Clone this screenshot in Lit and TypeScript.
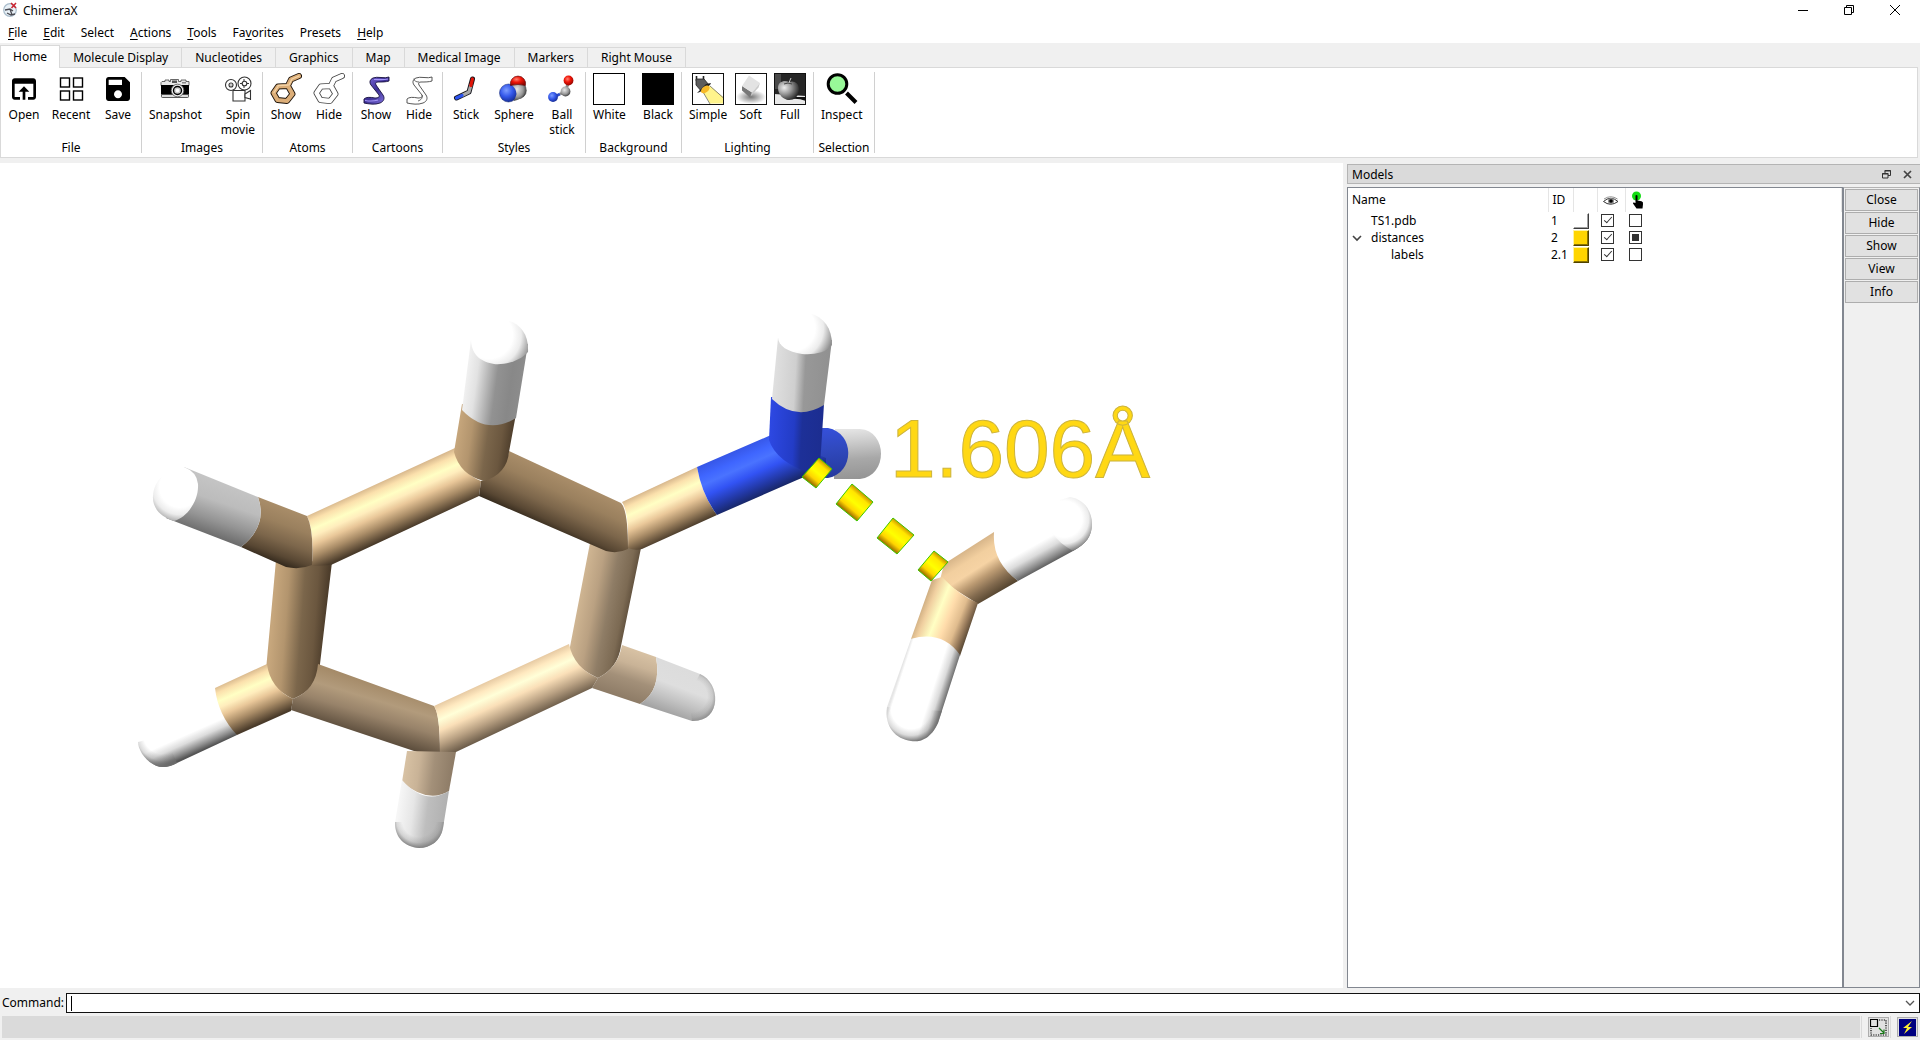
import { LitElement, html, css, svg, nothing, TemplateResult } from "lit";
import { customElement, property, state } from "lit/decorators.js";
import { classMap } from "lit/directives/class-map.js";
import { styleMap } from "lit/directives/style-map.js";

/* ---------- Icons ---------- */

const icon = (body: unknown, size = 32) => html`<svg class="icon" width=${size} height=${size} viewBox="0 0 ${size} ${size}" aria-hidden="true">${body}</svg>`;

const lampFrame = svg`<rect x=".5" y=".5" width="31" height="31" fill="none" stroke="#111"/>`;

const icons: Record<string, TemplateResult> = {
  open: icon(svg`<path transform="scale(1.3333)" d="M19 4H5c-1.11 0-2 .9-2 2v12c0 1.1.89 2 2 2h4v-2H5V8h14v10h-4v2h4c1.1 0 2-.9 2-2V6c0-1.1-.89-2-2-2zm-7 6l-4 4h3v6h2v-6h3l-4-4z"/>`),
  recent: icon(svg`<g fill="none" stroke="#000" stroke-width="1.4"><rect x="5.5" y="5" width="9" height="9"/><rect x="18.5" y="5" width="9" height="9"/><rect x="5.5" y="18" width="9" height="9"/><rect x="18.5" y="18" width="9" height="9"/></g>`),
  save: icon(svg`<path transform="scale(1.3333)" d="M17 3H5c-1.11 0-2 .9-2 2v14c0 1.1.89 2 2 2h14c1.1 0 2-.9 2-2V7l-4-4zm-5 16c-1.66 0-3-1.34-3-3s1.34-3 3-3 3 1.34 3 3-1.34 3-3 3zm3-10H5V5h10v4z"/>`),
  snapshot: icon(svg`
    <path d="M3 8.500h3V7h4v1.500h1.500V6.500h8V8.500H22V7h5v1.500h3v4H2v-3z" fill="#e8e8e8" stroke="#444" stroke-width=".8"/>
    <rect x="13" y="7.500" width="5" height="2.500" fill="#555"/><rect x="23" y="9" width="4" height="1.500" fill="#888"/>
    <rect x="2" y="12" width="28" height="9.500" fill="#000"/>
    <path d="M2.500 21.500h27v2.200q0 .8-1 .8h-25q-1 0-1-.8z" fill="#ddd" stroke="#333" stroke-width=".8"/>
    <circle cx="18.500" cy="17.500" r="6.300" fill="#eee" stroke="#555" stroke-width=".8"/><circle cx="18.500" cy="17.500" r="4" fill="#ccc" stroke="#000" stroke-width="1.400"/><circle cx="18.500" cy="17.500" r="1.800" fill="#fff"/>`),
  movie: icon(svg`
    <g fill="#fff" stroke="#333" stroke-width="1.100"><circle cx="9" cy="12" r="5.500"/><circle cx="22.500" cy="10.500" r="6.500"/><circle cx="9" cy="12" r="2"/><circle cx="22.500" cy="10.500" r="2.300"/>
    <path d="M11 17.500h12v10.500H11z"/><path d="M23 21l5.500-3.500v8.500L23 24.500z"/></g>
    <path d="M28.500 17.500V27M8.500 12h1M22 6v2M22 13v2M18 10.500h2M25 10.500h2" stroke="#333" fill="none"/>`),
  atomsShow: icon(svg`
    <g fill="none" stroke-linejoin="round" stroke-linecap="round">
      <path d="M8 13.500l10-.500 4.500 8-5.500 7-9.500-1-4-7zM18 12.500l3-6 8-3.500" stroke="#1d130a" stroke-width="6"/>
      <path d="M8 13.500l10-.500 4.500 8-5.500 7-9.500-1-4-7zM18 12.500l3-6 8-3.500" stroke="#dcae78" stroke-width="4.200"/>
      <path d="M8 12.500l10-.500M4 19.500l4-6M19 12l3-6 7-3" stroke="#f4d3a6" stroke-width="1.300"/></g>`),
  atomsHide: icon(svg`
    <g fill="none" stroke-linejoin="round" stroke-linecap="round">
      <path d="M8 13.500l10-.500 4.500 8-5.500 7-9.500-1-4-7zM18 12.500l3-6 8-3.500" stroke="#444" stroke-width="6"/>
      <path d="M8 13.500l10-.500 4.500 8-5.500 7-9.500-1-4-7zM18 12.500l3-6 8-3.500" stroke="#fff" stroke-width="4.400"/></g>`),
  cartoonShow: icon(svg`
    <defs><linearGradient id="rib" x1="0" x2="1" y1="0" y2="1"><stop offset="0" stop-color="#8672e8"/><stop offset=".5" stop-color="#3c2f94"/><stop offset="1" stop-color="#9384f2"/></linearGradient></defs>
    <path d="M29 4c-4 2-12-1-16 1-3 1.500-4 4-2 7l8 10c1 2-1 3-4 3-5-1-9-1-11 1v4c5 1 11 2 16 0 4-1.500 5-5 3-8L16 12c-1-2 0-3 2-3 4 0 8 0 11-1z" fill="url(#rib)" stroke="#16103c" stroke-width=".9"/>
    <path d="M5 27.500c5 .8 9 .8 13-.5M14 6.500c5 0 9 .7 14-.5" stroke="#a698fa" stroke-width="1.200" fill="none"/>`),
  cartoonHide: icon(svg`
    <path d="M29 4c-4 2-12-1-16 1-3 1.500-4 4-2 7l8 10c1 2-1 3-4 3-5-1-9-1-11 1v4c5 1 11 2 16 0 4-1.500 5-5 3-8L16 12c-1-2 0-3 2-3 4 0 8 0 11-1z" fill="#fff" stroke="#444" stroke-width=".9"/>
    <path d="M11 5.500c0 2.500 2 3.500 5 3.500M19 22c1 3-1 5-4 6" stroke="#444" stroke-width=".8" fill="none"/>`),
  stick: icon(svg`
    <g fill="none" stroke-linecap="round" stroke-linejoin="round">
      <path d="M6.500 25L19 19l3.500-13" stroke="#15151c" stroke-width="5"/>
      <path d="M12 22.500L19 19l1.800-6.500" stroke="#a8a8a8" stroke-width="3.200"/>
      <path d="M6.500 25l5.500-2.500" stroke="#2c54f0" stroke-width="3.200"/>
      <path d="M20.800 12.500l1.700-6.500" stroke="#e01408" stroke-width="3.200"/></g>`),
  sphere: icon(svg`
    <defs>
      <radialGradient id="sb" cx=".38" cy=".35" r=".7"><stop offset="0" stop-color="#7d9dff"/><stop offset=".5" stop-color="#3458ea"/><stop offset="1" stop-color="#142a90"/></radialGradient>
      <radialGradient id="sr" cx=".4" cy=".35" r=".7"><stop offset="0" stop-color="#ff8070"/><stop offset=".45" stop-color="#f01508"/><stop offset="1" stop-color="#8a0500"/></radialGradient>
      <radialGradient id="sg" cx=".4" cy=".35" r=".7"><stop offset="0" stop-color="#e8e8e8"/><stop offset=".6" stop-color="#999"/><stop offset="1" stop-color="#333"/></radialGradient>
    </defs>
    <circle cx="20" cy="17.500" r="8.300" fill="url(#sg)" stroke="#333" stroke-width=".6"/>
    <circle cx="10.500" cy="20" r="9" fill="url(#sb)" stroke="#142870" stroke-width=".5"/>
    <path d="M13 11.500q5 3.500 5.500 9.500-.5 3-3 7 10-2 12-9.500.5-3 0-5.500-4-5-14.500-1.500z" fill="url(#sg)"/>
    <path d="M12.500 12.500A7.700 7.700 0 1 1 27.500 12.500Q20 10.500 12.500 12.500z" fill="url(#sr)" stroke="#5a0000" stroke-width=".6"/>`),
  ball: icon(svg`
    <defs>
      <radialGradient id="bb" cx=".38" cy=".35" r=".7"><stop offset="0" stop-color="#7d9dff"/><stop offset=".5" stop-color="#3458ea"/><stop offset="1" stop-color="#142a90"/></radialGradient>
      <radialGradient id="br" cx=".4" cy=".35" r=".7"><stop offset="0" stop-color="#ff8070"/><stop offset=".45" stop-color="#f01508"/><stop offset="1" stop-color="#8a0500"/></radialGradient>
      <radialGradient id="bg" cx=".4" cy=".35" r=".7"><stop offset="0" stop-color="#e8e8e8"/><stop offset=".6" stop-color="#999"/><stop offset="1" stop-color="#333"/></radialGradient>
    </defs>
    <path d="M8 24l6-3" stroke="#2c4cc8" stroke-width="2.800"/><path d="M14 21l5-2" stroke="#888" stroke-width="2.800"/>
    <path d="M20 17l1.500-5" stroke="#888" stroke-width="2.800"/><path d="M21.500 12l1.500-5" stroke="#c01008" stroke-width="2.800"/>
    <circle cx="7" cy="24" r="4.900" fill="url(#bb)"/><circle cx="19.500" cy="18.500" r="4.900" fill="url(#bg)"/><circle cx="22.500" cy="7.500" r="4.900" fill="url(#br)"/>`),
  white: icon(svg`<rect x=".5" y=".5" width="31" height="31" fill="#fff" stroke="#000"/>`),
  black: icon(svg`<rect width="32" height="32"/>`),
  simple: icon(svg`
    <path d="M11 19l7 11.500H31V24L18 13z" fill="#fff48c"/><path d="M11 19l7 12M18 13l13 11.500" stroke="#555" stroke-width=".7"/>
    <path d="M4.500 3v5M11.500 3v5" stroke="#222" stroke-width="1.600"/>
    <path d="M4 6h8l5 6-7 7-6-7z" fill="#5c5c5c" stroke="#222" stroke-width=".8"/>
    <path d="M5 20l3-1 10-7 1-2-5 1-5 5z" fill="#222"/><ellipse cx="13" cy="16.500" rx="5" ry="3" transform="rotate(-38 13 16)" fill="#f7b928"/>${lampFrame}`),
  soft: icon(svg`
    <defs><radialGradient id="sh" cx=".5" cy=".5" r=".5"><stop offset="0" stop-color="#777"/><stop offset="1" stop-color="#fff"/></radialGradient></defs>
    <rect width="32" height="32" fill="#fff"/><ellipse cx="16" cy="24" rx="15" ry="7" fill="url(#sh)"/>
    <path d="M7 13l10 6.500-2 5-8-7z" fill="#777"/><path d="M14 2.500l11 7.500-8 9.500L7 13z" fill="#e3e3e3"/><path d="M17 19.500l8-9.500-1.500 4.500-8 9z" fill="#c9c9c9"/>${lampFrame}`),
  full: icon(svg`
    <defs><radialGradient id="ap" cx=".3" cy=".35" r=".75"><stop offset="0" stop-color="#eee"/><stop offset=".45" stop-color="#999"/><stop offset="1" stop-color="#222"/></radialGradient></defs>
    <rect width="32" height="32" fill="#262626"/><path d="M0 0h7v16H0z" fill="#4a4a4a"/><path d="M0 21l32 2v9H0z" fill="#e9e9e9"/><path d="M12 27q10-3 20 1v-4H18z" fill="#111"/>
    <path d="M4 15c0-7 7-8 11-6 5-2 10 1 10 7 0 8-5 11-10 11S4 22 4 15z" fill="url(#ap)"/><path d="M15 10q1-3 2-5" stroke="#ccc" stroke-width="1" fill="none"/><path d="M10 11q4-2 8 0" stroke="#444" fill="none"/>${lampFrame}`),
  inspect: icon(svg`<path d="M20.500 20l9.500 9.500" stroke="#000" stroke-width="4"/><circle cx="11.500" cy="11" r="9.300" fill="#98f898" stroke="#000" stroke-width="3"/>`),
};

const appLogo = svg`
  <circle cx="8" cy="9" r="6.300" fill="#e8f0f6" stroke="#a9bccb" stroke-width="1.200"/>
  <path d="M3 9l5-1 2 6M8 8l3 2M5 12l4 2 4-1" stroke="#4a4a52" stroke-width="1.300" fill="none"/>
  <path d="M9 2l5 5M14 2L9.500 7" stroke="#cc2430" stroke-width="1.500" fill="none"/>`;

/* ---------- Molecule scene ---------- */

const palettes: Record<string, string[]> = {
  tanBright: ["0 #d9b98e", ".12 #fbe0ac", ".28 #ffffc4", ".4 #ffedbd", ".55 #e9c799", ".75 #a98c67", "1 #4a3b2a"],
  tanSoft: ["0 #e6c9a2", ".15 #ffe9c0", ".3 #ffffd8", ".5 #fadfb8", ".75 #b9a183", "1 #6e5e4b"],
  tanDark: ["0 #a98d69", ".3 #9a805e", ".6 #7c664b", ".85 #584733", "1 #352a1d"],
  tanDim: ["0 #a58b69", ".3 #b29b7c", ".6 #98836a", "1 #5e4f3e"],
  tanSide: ["0 #c6a67c", ".25 #b3956e", ".55 #7b664b", ".8 #6b573f", "1 #4d3d2b"],
  tanSideSoft: ["0 #cfb592", ".3 #baa182", ".58 #8f7d66", ".85 #7c6a53", "1 #5e4e3b"],
  tanPale: ["0 #d8c2a4", ".3 #c9b397", ".6 #a39079", "1 #8d7b66"],
  tanTurn: ["0 #d8b68a", ".2 #f2cf9f", ".4 #f6d3a4", ".6 #bb9a72", ".8 #836b4f", "1 #54442f"],
  tanLeft: ["0 #c9a87c", ".15 #f0cfa0", ".35 #ffffc4", ".55 #ffdcab", ".75 #e0bc8e", ".9 #96795a", "1 #5f4d38"],
  blueBright: ["0 #3656e6", ".2 #3f66ff", ".35 #4a73ff", ".55 #3253f4", ".8 #2238a4", "1 #172560"],
  blueDark: ["0 #2d48e2", ".45 #233cc6", ".6 #1d3098", "1 #1c2d90"],
  blueFar: ["0 #3550da", ".4 #3049be", "1 #24389a"],
  whiteSide: ["0 #f2f2f2", ".2 #e2e2e2", ".55 #929292", ".8 #888888", "1 #8c8c8c"],
  whiteN: ["0 #e0e0e0", ".4 #cfcfcf", ".58 #989898", "1 #919191"],
  whiteBack: ["0 #e4e4e4", ".25 #cccccc", ".6 #a8a8a8", "1 #949494"],
  whiteDown: ["0 #c4c4c4", ".35 #bcbcbc", ".7 #949494", "1 #6a6a6a"],
  whiteFar: ["0 #dcdcdc", ".4 #dedede", ".7 #c2c2c2", "1 #a2a2a2"],
  whitePale: ["0 #f6f6f6", ".3 #e6e6e6", ".6 #bebebe", "1 #b0b0b0"],
  whiteBright: ["0 #ffffff", ".6 #ffffff", ".75 #dcdcdc", ".9 #8e8e8e", "1 #555555"],
  whiteGlow: ["0 #e6e6e6", ".05 #ffffff", ".7 #ffffff", ".85 #dadada", "1 #6f6f6f"],
  dash: ["0 #c48a00", ".2 #ffe600", ".5 #ffff00", ".75 #ffd400", "1 #8a5c00"],
};

const stops = (name: string) =>
  palettes[name].map((s) => {
    const [offset, color] = s.split(" ");
    return svg`<stop offset=${offset} stop-color=${color}/>`;
  });

/* Outline, palette, and the line across the tube from its upper or left edge. */
type Tube = [string, string, number, number, number, number];

const tubes: Tube[] = [
  ["M590 543L641 548L621 646Q618 668 598 678Q576 668 569 652z", "tanSideSoft", 580, 595, 631, 605],
  ["M276 560L332 562L320 664Q319 688 293 699Q268 686 266 670z", "tanSide", 273, 612, 326, 616],
  ["M215 688L138 742C138 752 150 767 163 767Q170 767 177 763L237 735L228 700z", "whiteBright", 215, 688, 236, 735],
  ["M215 688L267 664Q270 688 293 699L291 711L237 735Q218 715 215 688z", "tanBright", 240, 676, 261, 723],
  ["M318 664L434 706Q440 714 440 753Q430 756 420 753L291 710L293 699Q316 690 318 664z", "tanDim", 376, 684, 361, 734],
  ["M622 645L656 657Q662 690 640 704L592 688L598 678Q618 668 622 645z", "tanPale", 640, 651, 624, 699],
  ["M656 657L700 674C721 683 722 722 692 721L640 704Q662 690 656 657z", "whiteFar", 680, 667, 663, 712],
  ["M569 644Q574 668 598 678L592 688L456 752L440 753Q440 715 434 706z", "tanSoft", 501, 675, 522, 721],
  ["M407 751L456 752L449 791Q428 804 402 782z", "tanPale", 404, 767, 453, 773],
  ["M402 780Q425 806 449 791L443 828C441 841 430 848 419 848C405 847 395 838 395 823z", "whitePale", 398, 812, 446, 818],
  ["M455 448Q459 472 481 481L479 496L331 565L312 566Q314 530 307 516z", "tanBright", 381, 482, 403, 531],
  ["M258 497L307 516Q314 530 312 565Q300 570 286 567L241 547Q268 526 258 497z", "tanDark", 282, 506, 263, 558],
  ["M184 467L258 497Q268 526 241 547L166 518z", "whiteDown", 221, 482, 203, 534],
  ["M509 451L621 503Q628 510 628 549Q618 554 606 551L479 496L481 481Q505 474 509 451z", "tanDark", 565, 477, 542, 526],
  ["M462 404L454 452Q460 475 484 481Q507 474 509 452L516 414z", "tanSide", 458, 428, 513, 436],
  ["M471 340L462 410Q487 436 516 418L528 344z", "whiteSide", 465, 378, 522, 386],
  ["M622 502L697 467Q702 495 717 515L642 549Q635 551 628 548Q629 512 622 502z", "tanBright", 659, 485, 681, 532],
  ["M835 429H860C888 431 888 476 860 479H834z", "whiteBack", 856, 429, 860, 479],
  ["M818 428H828C855 433 855 473 828 478H812z", "blueFar", 830, 428, 836, 480],
  ["M697 467L771 435L826 458V468L797 480L717 515Q702 495 697 467z", "blueBright", 735, 450, 757, 499],
  ["M771 397L769 440Q776 462 812 474L820 466L824 404z", "blueDark", 770, 430, 823, 433],
  ["M778 338L772 399Q796 422 824 405L832 340z", "whiteN", 774, 368, 828, 371],
  ["M944 564L994 532Q994 562 1018 581L978 604L940 580z", "tanTurn", 971, 547, 1000, 592],
  ["M942 577Q960 596 978 603L960 656Q942 634 911 639L932 580z", "tanLeft", 920, 608, 970, 628],
  ["M911 639Q942 630 960 655L938 723C929 742 917 742 911 741C896 739 884 727 887 707z", "whiteGlow", 899, 676, 948, 692],
  ["M994 533L1070 497C1084 499 1092 511 1092 524C1092 536 1086 544 1073 551L1018 581Q992 562 994 533z", "whiteBright", 1025, 508, 1055, 562],
  ["M819 458L832 469L816 488L802 477z", "dash", 826, 463, 809, 483],
  ["M852 484L873 502L857 521L836 504z", "dash", 863, 493, 846, 513],
  ["M893 518L914 535L897 554L877 538z", "dash", 904, 526, 887, 547],
  ["M934 551L948 562L931 581L918 570z", "dash", 941, 556, 924, 576],
];

/* Rounded bond ends: outline, highlight centre and radius, rim color, and how solid the highlight is. */
type Cap = [string, number, number, number, string, number];

const caps: Cap[] = [
  ["M471 341C472 328 487 319 500 319C519 321 529 333 528 352C519 362 504 365 494 364C482 362 472 356 471 341z", 489, 335, 43, "#8f8f8f", 1],
  ["M184 467Q197 472 198 484C199 500 188 517 174 521C160 517 152 507 153 496C154 480 167 468 184 467z", 180, 487, 37, "#9a9a9a", 1],
  ["M778 337C779 321 794 313 809 313C824 317 832 328 832 345C826 353 813 355 802 354C788 352 778 346 778 337z", 792, 328, 42, "#8f8f8f", 1],
  ["M1060 500L1070 497C1084 499 1092 511 1092 524C1092 536 1086 544 1073 551Q1060 544 1052 533z", 1064, 519, 33, "#777777", 1],
  ["M887 707L942 711L938 723C929 742 917 742 911 741C896 739 884 727 887 707z", 911, 709, 33, "#6f6f6f", 0],
  ["M138 742C138 752 150 767 163 767Q170 767 177 763L165 735z", 163, 734, 33, "#6f6f6f", 0],
  ["M700 674C721 683 722 722 692 721L688 695z", 691, 696, 27, "#8c8c8c", 0],
  ["M395 822H444L443 828C441 841 430 848 419 848C405 847 395 838 395 823z", 419, 820, 28, "#808080", 0],
];

@customElement("molecule-view")
export class MoleculeView extends LitElement {
  static styles = css`
    :host { display: block; min-width: 0; min-height: 0; background: #fff; overflow: hidden; }
    .scene { display: block; width: 100%; height: 100%; }
    .distance { font-family: "Liberation Sans", Arial, sans-serif; font-size: 82px; fill: #ffd814; stroke: #cdb43c; stroke-width: 1; }
  `;

  render() {
    return html`<svg class="scene" viewBox="0 163 1343 825" preserveAspectRatio="xMidYMid meet" role="img" aria-label="TS1.pdb">
      <defs>
        ${tubes.map(([, name, x1, y1, x2, y2], i) => svg`<linearGradient id="t${i}" gradientUnits="userSpaceOnUse" x1=${x1} y1=${y1} x2=${x2} y2=${y2}>${stops(name)}</linearGradient>`)}
        ${caps.map(([, cx, cy, r, edge, solid], i) => svg`<radialGradient id="c${i}" gradientUnits="userSpaceOnUse" cx=${cx} cy=${cy} r=${r}>
          ${solid
            ? svg`<stop offset="0" stop-color="#fff"/><stop offset=".55" stop-color="#fff"/><stop offset=".75" stop-color="#ececec"/><stop offset="1" stop-color=${edge}/>`
            : svg`<stop offset=".6" stop-color=${edge} stop-opacity="0"/><stop offset=".8" stop-color=${edge} stop-opacity=".25"/><stop offset="1" stop-color=${edge}/>`}
        </radialGradient>`)}
      </defs>
      ${tubes.map(([d, name], i) => svg`<path d=${d} fill="url(#t${i})" stroke=${name === "dash" ? "#3cc800" : "none"} stroke-width="1"/>`)}
      ${caps.map(([d], i) => svg`<path d=${d} fill="url(#c${i})"/>`)}
      <text class="distance" x="890" y="477">1.606Å</text>
    </svg>`;
  }
}

/* ---------- Ribbon ---------- */

interface Tool { label: string; icon: string; }
interface Group { title: string; width: number; tools: Tool[]; }

const groups: Group[] = [
  { title: "File", width: 141, tools: [{ label: "Open", icon: "open" }, { label: "Recent", icon: "recent" }, { label: "Save", icon: "save" }] },
  { title: "Images", width: 121, tools: [{ label: "Snapshot", icon: "snapshot" }, { label: "Spin\nmovie", icon: "movie" }] },
  { title: "Atoms", width: 90, tools: [{ label: "Show", icon: "atomsShow" }, { label: "Hide", icon: "atomsHide" }] },
  { title: "Cartoons", width: 90, tools: [{ label: "Show", icon: "cartoonShow" }, { label: "Hide", icon: "cartoonHide" }] },
  { title: "Styles", width: 143, tools: [{ label: "Stick", icon: "stick" }, { label: "Sphere", icon: "sphere" }, { label: "Ball\nstick", icon: "ball" }] },
  { title: "Background", width: 96, tools: [{ label: "White", icon: "white" }, { label: "Black", icon: "black" }] },
  { title: "Lighting", width: 132, tools: [{ label: "Simple", icon: "simple" }, { label: "Soft", icon: "soft" }, { label: "Full", icon: "full" }] },
  { title: "Selection", width: 61, tools: [{ label: "Inspect", icon: "inspect" }] },
];

@customElement("tool-ribbon")
export class ToolRibbon extends LitElement {
  @state() private active = "Home";

  static styles = css`
    :host { display: block; padding: 2px 2px 5px 0; background: #f0f0f0; }
    button { font: inherit; color: inherit; border: 0; background: none; padding: 0; margin: 0; }
    .tabs { display: flex; align-items: flex-end; height: 22px; }
    .tab { height: 20px; padding: 0 13px; border: 1px solid #d9d9d9; border-left: 0; border-bottom: 0; background: #f0f0f0; white-space: nowrap; }
    .tab.active { height: 23px; margin-bottom: -1px; padding: 0 12px; border-left: 1px solid #d9d9d9; background: #fff; z-index: 1; }
    .panel { display: flex; height: 91px; box-sizing: border-box; padding-top: 4px; border: 1px solid #d9d9d9; background: #fff; }
    .group { flex: none; box-sizing: border-box; display: flex; flex-direction: column; height: 81px; border-right: 1px solid #d0d0d0; }
    .tools { flex: 1; display: flex; justify-content: space-between; align-items: flex-start; padding: 1px 7px 0; }
    .tool { display: flex; flex-direction: column; align-items: center; gap: 2px; line-height: 15px; white-space: pre-line; }
    .icon { display: block; }
    .title { text-align: center; line-height: 10px; }
  `;

  render() {
    const tabs = ["Home", "Molecule Display", "Nucleotides", "Graphics", "Map", "Medical Image", "Markers", "Right Mouse"];
    return html`
      <div class="tabs" role="tablist">
        ${tabs.map((t) => html`<button role="tab" aria-selected=${t === this.active} class=${classMap({ tab: true, active: t === this.active })} @click=${() => (this.active = t)}>${t}</button>`)}
      </div>
      <div class="panel" role="tabpanel">
        ${groups.map((g) => html`<section class="group" style=${styleMap({ width: `${g.width}px` })}>
          <div class="tools">${g.tools.map((t) => html`<button class="tool">${icons[t.icon]}<span>${t.label}</span></button>`)}</div>
          <div class="title">${g.title}</div>
        </section>`)}
      </div>`;
  }
}

/* ---------- Models panel ---------- */

interface Model { name: string; id: string; depth: number; open?: boolean; color?: string; shown: boolean; selected: "no" | "partial"; }

@customElement("models-panel")
export class ModelsPanel extends LitElement {
  @property({ attribute: false }) models: Model[] = [
    { name: "TS1.pdb", id: "1", depth: 0, shown: true, selected: "no" },
    { name: "distances", id: "2", depth: 0, open: true, color: "#ffd500", shown: true, selected: "partial" },
    { name: "labels", id: "2.1", depth: 1, color: "#ffd500", shown: true, selected: "no" },
  ];

  static styles = css`
    :host { display: flex; flex-direction: column; gap: 3px; min-height: 0; }
    button { font: inherit; color: inherit; margin: 0; }
    .caption { display: flex; align-items: center; gap: 10px; height: 20px; box-sizing: border-box; padding: 1px 7px 0 4px; border: 1px solid #b4b4b4; border-right: 0; background: #dadada; }
    .caption-text { flex: 1; }
    .caption-button { display: block; padding: 0; border: 0; background: none; line-height: 0; }
    .body { flex: 1; display: flex; min-height: 0; }
    .tree { flex: 1; min-width: 0; border: 1px solid #828790; background: #fff; }
    .table { width: 100%; table-layout: fixed; border-collapse: collapse; }
    .c-name { width: 200px; } .c-id { width: 25px; } .c-color { width: 24px; } .c-shown { width: 28px; }
    th { height: 24px; padding: 0 0 0 4px; border-right: 1px solid #e5e5e5; text-align: left; font-weight: 400; }
    td { height: 17px; padding: 0; line-height: 17px; vertical-align: middle; }
    .name { display: flex; align-items: center; }
    .toggle { width: 19px; height: 17px; padding: 0; border: 0; background: none; text-align: left; line-height: 0; margin-left: 4px; }
    .indent { width: 20px; }
    .id { padding-left: 3px; }
    .swatch { display: block; width: 16px; height: 16px; padding: 0; border: 1px solid; border-color: #fff #3c3c3c #3c3c3c #fff; background: #fff; }
    .swatch.filled { border-color: #fff3a0 #4f4200 #4f4200 #fff3a0; box-shadow: inset -1px -1px #8a7300; }
    .swatch.blank { box-shadow: inset -1px -1px #a0a0a0; }
    .box { appearance: none; box-sizing: border-box; display: block; width: 13px; height: 13px; margin: 0 0 0 4px; border: 1px solid #333; background: #fff; position: relative; }
    .box:checked::after { content: ""; position: absolute; left: 4px; top: 0; width: 3px; height: 7px; border: solid #333; border-width: 0 1px 1px 0; transform: rotate(42deg); }
    .box.partial::after { content: ""; position: absolute; left: 2px; top: 2px; width: 7px; height: 7px; background: #333; }
    .actions { width: 77px; box-sizing: border-box; display: flex; flex-direction: column; gap: 1px; padding: 1px 1px 0 1px; border: 1px solid #828790; border-color: #b4b4b4 #828790 #828790; background: #f0f0f0; }
    .action { height: 22px; padding: 0; border: 1px solid #adadad; background: #e1e1e1; }
    svg { display: inline-block; vertical-align: middle; }
  `;

  private row(m: Model) {
    return html`<tr>
      <td><div class="name">
        <button class="toggle" aria-label=${`Expand ${m.name}`}>${m.open ? html`<svg width="10" height="8" viewBox="0 0 10 8"><path d="M1 2l4 4 4-4" fill="none" stroke="#444" stroke-width="1.6"/></svg>` : nothing}</button>
        ${m.depth ? html`<span class="indent"></span>` : nothing}<span>${m.name}</span></div></td>
      <td class="id">${m.id}</td>
      <td><button class=${classMap({ swatch: true, filled: !!m.color, blank: !m.color })} aria-label=${`Color of ${m.name}`} style=${styleMap({ background: m.color ?? "#fff" })}></button></td>
      <td><input class="box" type="checkbox" aria-label=${`Show ${m.name}`} .checked=${m.shown} /></td>
      <td><input class=${classMap({ box: true, partial: m.selected === "partial" })} type="checkbox" aria-label=${`Select ${m.name}`} .indeterminate=${m.selected === "partial"} /></td>
    </tr>`;
  }

  render() {
    return html`
      <div class="caption"><span class="caption-text">Models</span>
        <button class="caption-button" aria-label="Float"><svg width="11" height="11" viewBox="0 0 11 11"><path d="M4 4V1.500h5.500v5H7M3.500 2h6.500" fill="none" stroke="#333"/><path d="M1.500 4.500h5.500v4.500H1.500zM1 5h6.500" fill="none" stroke="#333"/></svg></button>
        <button class="caption-button" aria-label="Close panel"><svg width="11" height="11" viewBox="0 0 11 11"><path d="M2 2l7 7M9 2l-7 7" stroke="#444" stroke-width="1.700"/></svg></button>
      </div>
      <div class="body">
        <div class="tree"><table class="table">
          <colgroup><col class="c-name" /><col class="c-id" /><col class="c-color" /><col class="c-shown" /><col /></colgroup>
          <thead><tr><th>Name</th><th>ID</th><th aria-label="Color"></th>
            <th aria-label="Shown"><svg width="18" height="12" viewBox="0 0 18 12"><path d="M1.500 6.500Q8.500 0 16 6.500 8.500 12 1.500 6.500z" fill="#fff" stroke="#333"/><path d="M2 4Q8.500-.5 15.500 4" fill="none" stroke="#777" stroke-width=".8"/><circle cx="9" cy="6" r="3" fill="#888"/><circle cx="9" cy="6" r="1.800" fill="#000"/></svg></th>
            <th aria-label="Selected"><svg width="16" height="18" viewBox="0 0 16 18"><circle cx="6.500" cy="5" r="4.500" fill="#14dc14"/><path d="M5.500 4.500q1.300-1 2 .3V9.500l4 .7q2 .5 1.500 3L12.500 17.500H6.500L3 12.500q-.3-1.500 2.500-.5z" fill="#000"/></svg></th></tr></thead>
          <tbody>${this.models.map((m) => this.row(m))}</tbody>
        </table></div>
        <div class="actions">${["Close", "Hide", "Show", "View", "Info"].map((a) => html`<button class="action">${a}</button>`)}</div>
      </div>`;
  }
}

/* ---------- Application window ---------- */

@customElement("app-root")
export class AppRoot extends LitElement {
  static styles = css`
    :host { display: flex; flex-direction: column; height: 100vh; box-sizing: border-box; background: #f0f0f0; color: #000; font: 12px/16px "Noto Sans", "Open Sans", sans-serif; overflow: hidden; }
    button { font: inherit; color: inherit; border: 0; background: none; padding: 0; margin: 0; }
    svg { display: block; }
    .titlebar { display: flex; align-items: flex-start; height: 22px; padding: 0 2px; background: #fff; }
    .logo { padding-top: 1px; }
    .title { flex: 1; padding: 3px 0 0 5px; }
    .window-button { width: 46px; height: 20px; display: grid; place-items: center; }
    .menubar { display: flex; height: 21px; background: #fff; }
    .menu { padding: 1px 8px 0; line-height: 20px; }
    .menu u { text-underline-offset: 2px; }
    .work { flex: 1; display: flex; gap: 4px; min-height: 0; }
    .view { flex: 1; }
    .side { width: 573px; padding: 1px 0 0; }
    .command { display: flex; align-items: center; height: 28px; box-sizing: border-box; padding: 5px 0 3px 2px; }
    .label { padding-right: 2px; }
    .field { flex: 1; display: flex; align-items: center; align-self: stretch; border: 1px solid #111; background: #fff; padding-left: 4px; }
    .caret { width: 1px; height: 15px; background: #000; }
    .input { flex: 1; min-width: 0; border: 0; outline: 0; padding: 0; font: inherit; background: none; }
    .drop { width: 14px; }
    .status { display: flex; align-items: center; height: 22px; padding: 0 2px 2px; }
    .message { flex: 1; height: 22px; background: #dadada; }
    .divider { width: 1px; height: 22px; margin: 0 6px 0 1px; background: #dadada; }
    .status-button { box-sizing: border-box; width: 21px; height: 20px; display: grid; place-items: center; border: 1px solid #adadad; background: #e1e1e1; }
  `;

  private menus: [string, string, string][] = [
    ["", "F", "ile"], ["", "E", "dit"], ["Select", "", ""], ["", "A", "ctions"],
    ["", "T", "ools"], ["Fa", "v", "orites"], ["Presets", "", ""], ["", "H", "elp"],
  ];

  render() {
    return html`
      <header class="titlebar">
        <svg class="logo" width="16" height="18" viewBox="0 0 16 18" aria-hidden="true">${appLogo}</svg><span class="title">ChimeraX</span>
        <button class="window-button" aria-label="Minimize"><svg width="10" height="10"><path d="M0 5.500h10" stroke="#000"/></svg></button>
        <button class="window-button" aria-label="Restore"><svg width="10" height="10"><path d="M.5 2.500h7v7h-7zM2.500 2V.5h7v7H8" fill="none" stroke="#000"/></svg></button>
        <button class="window-button" aria-label="Close"><svg width="10" height="10"><path d="M0 0l10 10M10 0L0 10" stroke="#000"/></svg></button>
      </header>
      <nav class="menubar">${this.menus.map(([a, k, b]) => html`<button class="menu">${a}${k ? html`<u>${k}</u>` : nothing}${b}</button>`)}</nav>
      <tool-ribbon></tool-ribbon>
      <main class="work"><molecule-view class="view"></molecule-view><models-panel class="side"></models-panel></main>
      <div class="command">
        <label class="label" for="command">Command:</label>
        <div class="field"><span class="caret"></span><input class="input" id="command" type="text" autocomplete="off" /><button class="drop" aria-label="Command history"><svg width="10" height="8" viewBox="0 0 10 8"><path d="M1 2l4 4 4-4" fill="none" stroke="#555" stroke-width="1.300"/></svg></button></div>
      </div>
      <footer class="status"><div class="message" role="status"></div>
        <span class="divider"></span>
        <button class="status-button" aria-label="Resize graphics"><svg width="17" height="17"><path d="M.5.500h7v7h-7z" fill="none" stroke="#000" stroke-width="1.200"/><path d="M9 1h7v15H1V9" fill="none" stroke="#000" stroke-width="1.200" stroke-dasharray="1.200 1.200"/><path d="M9 9l5 5M14 10.500V14.500H10" fill="none" stroke="#187818" stroke-width="1.200"/></svg></button>
        <span class="divider"></span>
        <button class="status-button" aria-label="Rapid access"><svg width="17" height="17"><path d="M0 0h17v17H0z" fill="#000080"/><path d="M13 2L4 9h4l-3 6 8-7H9z" fill="#ffee32"/></svg></button>
      </footer>`;
  }
}
